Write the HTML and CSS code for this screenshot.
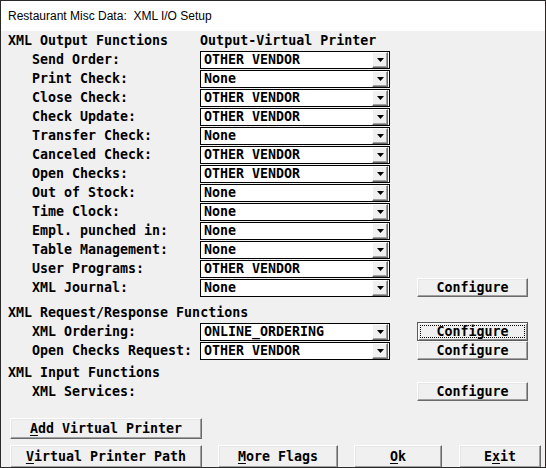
FILE: index.html
```html
<!DOCTYPE html>
<html>
<head>
<meta charset="utf-8">
<link rel="stylesheet" href="styles.css">
</head>
<body>
<div class="window">
  <div class="titlebar">Restaurant Misc Data:&nbsp; XML I/O Setup</div>
  <div class="content">
    <div class="row">
      <span class="label sec">XML Output Functions</span>
      <span class="colhead">Output-Virtual Printer</span>
    </div>
    <div class="row"><span class="label">Send Order:</span><div class="combo"><span class="val">OTHER VENDOR</span><span class="drop"><svg width="7" height="4" viewBox="0 0 7 4"><polygon points="0,0 7,0 3.5,4" fill="#000"/></svg></span></div></div>
    <div class="row"><span class="label">Print Check:</span><div class="combo"><span class="val">None</span><span class="drop"><svg width="7" height="4" viewBox="0 0 7 4"><polygon points="0,0 7,0 3.5,4" fill="#000"/></svg></span></div></div>
    <div class="row"><span class="label">Close Check:</span><div class="combo"><span class="val">OTHER VENDOR</span><span class="drop"><svg width="7" height="4" viewBox="0 0 7 4"><polygon points="0,0 7,0 3.5,4" fill="#000"/></svg></span></div></div>
    <div class="row"><span class="label">Check Update:</span><div class="combo"><span class="val">OTHER VENDOR</span><span class="drop"><svg width="7" height="4" viewBox="0 0 7 4"><polygon points="0,0 7,0 3.5,4" fill="#000"/></svg></span></div></div>
    <div class="row"><span class="label">Transfer Check:</span><div class="combo"><span class="val">None</span><span class="drop"><svg width="7" height="4" viewBox="0 0 7 4"><polygon points="0,0 7,0 3.5,4" fill="#000"/></svg></span></div></div>
    <div class="row"><span class="label">Canceled Check:</span><div class="combo"><span class="val">OTHER VENDOR</span><span class="drop"><svg width="7" height="4" viewBox="0 0 7 4"><polygon points="0,0 7,0 3.5,4" fill="#000"/></svg></span></div></div>
    <div class="row"><span class="label">Open Checks:</span><div class="combo"><span class="val">OTHER VENDOR</span><span class="drop"><svg width="7" height="4" viewBox="0 0 7 4"><polygon points="0,0 7,0 3.5,4" fill="#000"/></svg></span></div></div>
    <div class="row"><span class="label">Out of Stock:</span><div class="combo"><span class="val">None</span><span class="drop"><svg width="7" height="4" viewBox="0 0 7 4"><polygon points="0,0 7,0 3.5,4" fill="#000"/></svg></span></div></div>
    <div class="row"><span class="label">Time Clock:</span><div class="combo"><span class="val">None</span><span class="drop"><svg width="7" height="4" viewBox="0 0 7 4"><polygon points="0,0 7,0 3.5,4" fill="#000"/></svg></span></div></div>
    <div class="row"><span class="label">Empl. punched in:</span><div class="combo"><span class="val">None</span><span class="drop"><svg width="7" height="4" viewBox="0 0 7 4"><polygon points="0,0 7,0 3.5,4" fill="#000"/></svg></span></div></div>
    <div class="row"><span class="label">Table Management:</span><div class="combo"><span class="val">None</span><span class="drop"><svg width="7" height="4" viewBox="0 0 7 4"><polygon points="0,0 7,0 3.5,4" fill="#000"/></svg></span></div></div>
    <div class="row"><span class="label">User Programs:</span><div class="combo"><span class="val">OTHER VENDOR</span><span class="drop"><svg width="7" height="4" viewBox="0 0 7 4"><polygon points="0,0 7,0 3.5,4" fill="#000"/></svg></span></div></div>
    <div class="row"><span class="label">XML Journal:</span><div class="combo"><span class="val">None</span><span class="drop"><svg width="7" height="4" viewBox="0 0 7 4"><polygon points="0,0 7,0 3.5,4" fill="#000"/></svg></span></div><button class="btn cfg">Configure</button></div>

    <div class="row gap6"><span class="label sec">XML Request/Response Functions</span></div>
    <div class="row"><span class="label">XML Ordering:</span><div class="combo"><span class="val">ONLINE_ORDERING</span><span class="drop"><svg width="7" height="4" viewBox="0 0 7 4"><polygon points="0,0 7,0 3.5,4" fill="#000"/></svg></span></div><button class="btn cfg focus"><span class="focusring">Configure</span></button></div>
    <div class="row"><span class="label">Open Checks Request:</span><div class="combo"><span class="val">OTHER VENDOR</span><span class="drop"><svg width="7" height="4" viewBox="0 0 7 4"><polygon points="0,0 7,0 3.5,4" fill="#000"/></svg></span></div><button class="btn cfg">Configure</button></div>

    <div class="row gap4"><span class="label sec">XML Input Functions</span></div>
    <div class="row"><span class="label">XML Services:</span><div class="spacer"></div><button class="btn cfg">Configure</button></div>

    <div class="addrow"><button class="btn add"><u>A</u>dd Virtual Printer</button></div>
    <div class="bottom">
      <button class="btn b1"><u>V</u>irtual Printer Path</button>
      <button class="btn b2"><u>M</u>ore Flags</button>
      <button class="btn b3"><u>O</u>k</button>
      <button class="btn b4">E<u>x</u>it</button>
    </div>
  </div>
</div>
</body>
</html>
```

FILE: styles.css
```css
* { box-sizing: border-box; }
html, body { margin: 0; padding: 0; background: #f0f0f0; }
.window {
  width: 546px;
  height: 468px;
  border: 1px solid #2a2a2a;
  border-right-color: #3a2020;
  background: #f0f0f0;
  overflow: hidden;
  display: flex;
  flex-direction: column;
}
.titlebar {
  height: 30px;
  background: #ffffff;
  font-family: "Liberation Sans", Arial, sans-serif;
  font-size: 12px;
  color: #000;
  padding-left: 7px;
  line-height: 30px;
  white-space: pre;
}
.content {
  flex: 1;
  padding: 0 0 0 7px;
  font-family: "DejaVu Sans Mono", "Liberation Mono", monospace;
  font-weight: bold;
  font-size: 13.3px;
  color: #000;
  display: flex;
  flex-direction: column;
}
.row {
  height: 19px;
  display: flex;
  align-items: center;
  white-space: pre;
}
.gap6 { margin-top: 6px; }
.gap4 { margin-top: 3px; }
.label {
  width: 192px;
  padding-left: 24px;
  flex: none;
}
.label.sec { padding-left: 0; width: auto; }
.row .label.sec + .colhead { margin-left: 32px; }
.combo {
  width: 190px;
  height: 18px;
  margin-top: 1px;
  align-self: flex-start;
  border: 1px solid #000;
  background: #fff;
  display: flex;
  align-items: center;
  flex: none;
}
.val {
  flex: 1;
  padding-left: 3px;
  line-height: 16px;
}
.drop {
  width: 16px;
  height: 16px;
  background: #f0f0f0;
  border: 1px solid;
  border-color: #fff #696969 #696969 #fff;
  box-shadow: inset -1px -1px #a0a0a0;
  display: flex;
  align-items: center;
  justify-content: center;
  padding-bottom: 1px;
  margin-right: 1px;
}
.drop svg { display: block; }
.spacer { width: 190px; flex: none; }
.btn {
  font-family: "DejaVu Sans Mono", "Liberation Mono", monospace;
  font-weight: bold;
  font-size: 13.3px;
  color: #000;
  background: #f0f0f0;
  border: 1px solid;
  border-color: #fff #6a6a6a #6a6a6a #fff;
  box-shadow: inset -1px -1px #a0a0a0, inset 1px 1px #e6e6e6;
  padding: 0;
  margin: 0;
  display: flex;
  align-items: center;
  justify-content: center;
  white-space: pre;
}
.btn u { text-decoration-thickness: 1px; text-underline-offset: 2px; }
.cfg {
  width: 111px;
  height: 19px;
  margin-left: 27px;
}
.cfg.focus {
  border: 1px solid #5a5a5a;
  box-shadow: inset 1px 1px #fff, inset -1px -1px #8a8a8a;
  padding: 2px;
}
.focusring {
  flex: 1;
  align-self: stretch;
  border: 1px dotted #000;
  display: flex;
  align-items: center;
  justify-content: center;
}
.addrow {
  margin-top: 17px;
  padding-left: 2px;
}
.add { width: 192px; height: 21px; }
.bottom {
  margin-top: 6px;
  padding-left: 2px;
  display: flex;
  height: 23px;
}
.bottom .btn { height: 23px; }
.b1 { width: 192px; }
.b2 { width: 120px; margin-left: 16px; }
.b3 { width: 88px; margin-left: 16px; }
.b4 { width: 82px; margin-left: 17px; }
```
